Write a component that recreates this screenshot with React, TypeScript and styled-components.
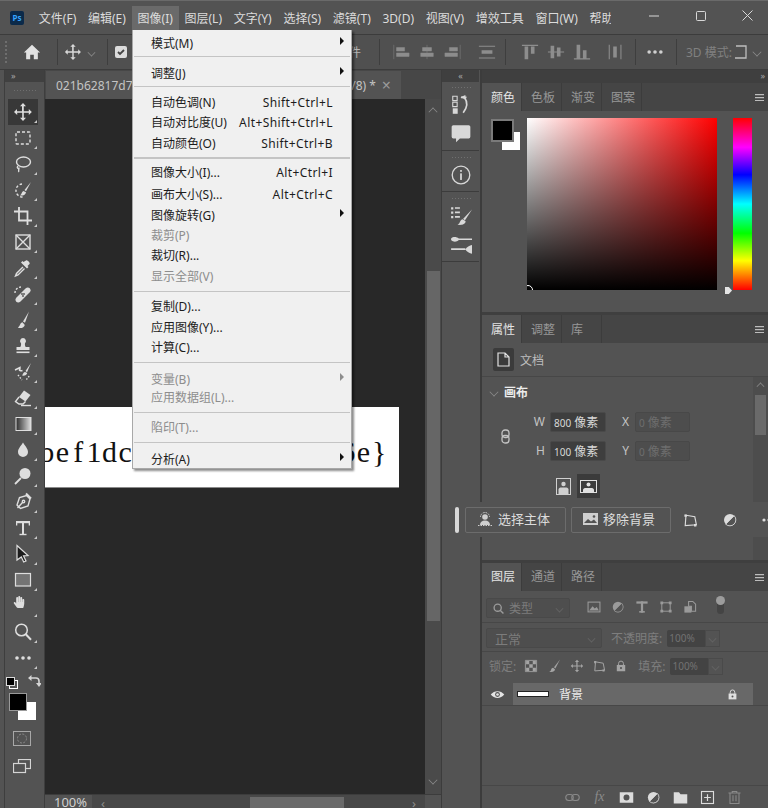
import React from "react";
import styled, { createGlobalStyle } from "styled-components";
import { FaHandPaper } from "react-icons/fa";

const FONT = `"Noto Sans", "Noto Sans CJK SC", sans-serif`;

const GlobalStyle = createGlobalStyle`
  html, body { margin: 0; padding: 0; background: #535353; }
  * { box-sizing: border-box; }
`;

const menuBar = ["文件(F)", "编辑(E)", "图像(I)", "图层(L)", "文字(Y)", "选择(S)", "滤镜(T)", "3D(D)", "视图(V)", "增效工具", "窗口(W)", "帮助"];

type Entry = { label?: string; keys?: string; sub?: boolean; off?: boolean; gap: number; sep?: boolean; bold?: boolean };

const imageMenu: Entry[] = [
  { label: "模式(M)", sub: true, gap: 0 },
  { sep: true, gap: 3 },
  { label: "调整(J)", sub: true, gap: 6 },
  { sep: true, gap: 3 },
  { label: "自动色调(N)", keys: "Shift+Ctrl+L", gap: 5 },
  { label: "自动对比度(U)", keys: "Alt+Shift+Ctrl+L", gap: 0 },
  { label: "自动颜色(O)", keys: "Shift+Ctrl+B", gap: 1 },
  { sep: true, bold: true, gap: 4 },
  { label: "图像大小(I)...", keys: "Alt+Ctrl+I", gap: 4 },
  { label: "画布大小(S)...", keys: "Alt+Ctrl+C", gap: 2 },
  { label: "图像旋转(G)", sub: true, gap: 1 },
  { label: "裁剪(P)", off: true, gap: 0 },
  { label: "裁切(R)...", gap: 0 },
  { label: "显示全部(V)", off: true, gap: 1 },
  { sep: true, gap: 5 },
  { label: "复制(D)...", gap: 4 },
  { label: "应用图像(Y)...", gap: 1 },
  { label: "计算(C)...", gap: 0 },
  { sep: true, gap: 5 },
  { label: "变量(B)", sub: true, off: true, gap: 6 },
  { label: "应用数据组(L)...", off: true, gap: -2 },
  { sep: true, gap: 5 },
  { label: "陷印(T)...", off: true, gap: 4 },
  { sep: true, gap: 5 },
  { label: "分析(A)", sub: true, gap: 6 },
];

const Icon = ({ size = 20, children }: { size?: number; children: React.ReactNode }) => (
  <svg width={size} height={size} viewBox="0 0 20 20" fill="currentColor">
    {children}
  </svg>
);

const line = { fill: "none", stroke: "currentColor", strokeWidth: 1.4 };

const MoveGlyph = () => (
  <path d="M10 1l3 3.200h-2.200v5h5V7l3 3-3 3v-2.200h-5v5H13L10 19l-3-3.200h2.200v-5h-5V13L1 10l3-3v2.200h5v-5H7z" />
);
const BrushGlyph = () => (
  <>
    <path d="M17.500 2L10 11.500l1.700 1.500z" />
    <path d="M9 12.300c-2 .2-2.400 1.600-3 3.200-.3.8-1.200 1.400-2 1.600 3 1 7 .4 7.300-2.600z" />
  </>
);
const EyeGlyph = () => (
  <>
    <path d="M1 10c4.500-6 13.500-6 18 0-4.500 6-13.500 6-18 0z" />
    <circle cx="10" cy="10" r="3.200" fill="#535353" />
    <circle cx="10" cy="10" r="1.800" />
  </>
);
const ContrastGlyph = () => (
  <>
    <circle cx="10" cy="10" r="7.500" />
    <path d="M15.300 4.700A7.500 7.500 0 0 1 4.700 15.300z" fill="#535353" stroke="currentColor" />
  </>
);
const LockGlyph = () => (
  <>
    <path d="M6.500 9V6.500a3.500 3.500 0 0 1 7 0V9" {...line} />
    <rect x="4" y="8.500" width="12" height="9" />
    <circle cx="10" cy="13" r="1.500" fill="#535353" />
  </>
);
const TransformGlyph = () => (
  <g {...line}>
    <path d="M5 4l11 2 2 10-14 1z" />
    <path d="M3 3h3v3H3zM15 15h3v3h-3z" fill="currentColor" stroke="none" />
  </g>
);
const BoxCorners = () => (
  <>
    <rect x="4" y="4" width="12" height="12" {...line} />
    <path d="M2 2h4v4H2zM14 2h4v4h-4zM2 14h4v4H2zM14 14h4v4h-4z" />
  </>
);

const tools: React.ReactNode[] = [
  <MoveGlyph />,
  <rect x="3" y="4" width="14" height="12" rx="1" {...line} strokeDasharray="3 2" />,
  <>
    <ellipse cx="10.500" cy="8" rx="7" ry="5" {...line} />
    <path d="M5 12c-2 2 1 3.500 1 1.500 0 2-1 3.500 0 4.500" {...line} />
  </>,
  <>
    <path d="M9 4a6.500 6.500 0 1 0 1 13" {...line} strokeDasharray="2.500 1.800" />
    <path d="M18 2l-6.500 8 1.500 1.300z" />
    <path d="M10.500 11c-2 .5-1.500 3-3.500 4.500 3 .5 6-1 6-3.300z" />
  </>,
  <path d="M6 1v13.500h13M1 5.500h13.500V19" fill="none" stroke="currentColor" strokeWidth="1.800" />,
  <g {...line}>
    <rect x="3" y="3" width="14" height="14" />
    <path d="M3 3l14 14M17 3L3 17" />
  </g>,
  <>
    <path d="M10 9l-6.500 6.500L2.500 18l2.500-1L11.500 10.500" {...line} />
    <path d="M13 2.500c1-1.200 4.700 2.500 3.500 3.500l-2 2 1 1-1.500 1.500-6-6L9.500 3l1 1z" />
  </>,
  <>
    <path d="M8 3a6 6 0 0 0-6 6" {...line} strokeDasharray="2 1.600" />
    <path d="M3.500 13.500l9-9c3-3 7 1 4 4l-9 9c-3 3-7-1-4-4z" />
    <circle cx="9" cy="10" r=".9" fill="#535353" />
    <circle cx="11" cy="10" r=".9" fill="#535353" />
    <circle cx="10" cy="12" r=".9" fill="#535353" />
  </>,
  <>
    <path d="M16 1.500l-6 10 2 1.200z" />
    <path d="M9.500 12.300c-2 .3-2 2-3 3.500-.5.8-1 1.200-1.700 1.600 2.500 1.300 6.500.5 7-2.500z" />
  </>,
  <>
    <path d="M10 2a3 3 0 0 1 2 5.200c-.3 1.500.2 3 .7 3.800H16.500v3h-13v-3h3.800c.5-.8 1-2.300.7-3.800A3 3 0 0 1 10 2z" />
    <rect x="3.500" y="15.500" width="13" height="1.600" />
  </>,
  <>
    <path d="M18 1l-5.500 8 1.500 1.200z" />
    <path d="M12 10c-2 .3-1.800 2.200-3 3.600 2.500.6 5-.6 5.200-2.500z" />
    <path d="M2 8l5-2.500v1.600C5 8.500 8 9 9.500 8.500" {...line} />
    <path d="M5 13l4 5M16 14a6 6 0 0 1-4 4" {...line} strokeDasharray="1.500 1.500" />
  </>,
  <>
    <path d="M11 2.500l6.500 4.500-5 6.500-6.500-4.500z" />
    <path d="M6 9l-3.500 4.500L6 16h4l2.500-2.500" {...line} />
    <path d="M8 17.500h10" {...line} />
  </>,
  <>
    <defs>
      <linearGradient id="toolGrad" x1="0" x2="1">
        <stop offset="0" stopColor="#2c2c2c" />
        <stop offset="1" stopColor="#e0e0e0" />
      </linearGradient>
    </defs>
    <rect x="3" y="3.500" width="15" height="13" fill="url(#toolGrad)" stroke="currentColor" strokeWidth="1" />
  </>,
  <path d="M10 2.500c2 3.500 5 6 5 9.500a5 5 0 0 1-10 0c0-3.500 3-6 5-9.500z" />,
  <>
    <circle cx="12" cy="7.500" r="5.500" />
    <path d="M8 12l-6 6" fill="none" stroke="currentColor" strokeWidth="1.800" />
  </>,
  <g {...line}>
    <path d="M13.500 3.500l3.500 3.500-2 7-7.500 2.500L4 13l2.500-7.500z" />
    <path d="M4.500 16l5-5.500" />
    <circle cx="10.500" cy="9.500" r="1.200" />
    <path d="M13 1.500l5 5" strokeWidth="2" />
  </g>,
  <>
    <rect x="3" y="3" width="14" height="2.200" />
    <rect x="9" y="3" width="2" height="14" />
    <rect x="6.500" y="15.800" width="7" height="1.400" />
    <rect x="3" y="3" width="1.300" height="4.500" />
    <rect x="15.700" y="3" width="1.300" height="4.500" />
  </>,
  <>
    <path d="M4 1.500l11 10-4.500.3L13 17l-2.300 1-2.400-5L4 16z" fill="#1c1c1c" stroke="currentColor" strokeWidth="1.200" />
  </>,
  <rect x="2.500" y="3.500" width="15" height="12.500" fill="#747474" stroke="currentColor" strokeWidth="1.200" />,
  <FaHandPaper x="0" y="0" width="20" height="20" />,
  <g {...line} strokeWidth={1.500}>
    <circle cx="8.500" cy="8" r="5.800" />
    <path d="M12.800 12.300l5.200 5.400" strokeWidth={2} />
  </g>,
  <>
    <circle cx="4" cy="10" r="1.800" />
    <circle cx="10" cy="10" r="1.800" />
    <circle cx="16" cy="10" r="1.800" />
  </>,
];

export default function App() {
  return (
    <Window>
      <GlobalStyle />
      <TitleBar>
        <PsLogo>Ps</PsLogo>
        <MenuItems>
          {menuBar.map((m) => (
            <TopItem key={m} $open={m === "图像(I)"}>
              {m}
            </TopItem>
          ))}
        </MenuItems>
        <WinButtons>
          <WinButton>
            <svg width="10" height="10" viewBox="0 0 10 10"><path d="M0 5h10" stroke="currentColor" /></svg>
          </WinButton>
          <WinButton>
            <svg width="10" height="10" viewBox="0 0 10 10"><rect x=".5" y=".5" width="9" height="9" rx="1" fill="none" stroke="currentColor" /></svg>
          </WinButton>
          <WinButton>
            <svg width="11" height="11" viewBox="0 0 11 11"><path d="M.5.5l10 10M10.500.5l-10 10" stroke="currentColor" /></svg>
          </WinButton>
        </WinButtons>
      </TitleBar>

      <OptionsBar>
        <Grip />
        <OptHome>
          <Icon size={18}><path d="M10 2L1 10.500h2.500V18h4.500v-5h4v5h4.500v-7.500H19z" /></Icon>
        </OptHome>
        <OptSep />
        <OptMove>
          <Icon size={18}><MoveGlyph /></Icon>
          <Chevron $w={7} />
        </OptMove>
        <OptSep />
        <OptCheck>
          <svg width="10" height="10" viewBox="0 0 10 10"><path d="M2 5l2 2 4-4" fill="none" stroke="#444" strokeWidth="1.800" /></svg>
        </OptCheck>
        <OptGhost>件</OptGhost>
        <OptSep $mr={12} />
        <AlignGroup>
          {[
            "M2 2v16M5 5h9v4H5zM5 11h14v4H5z",
            "M10 2v16M5 5h10v4H5zM3 11h14v4H3z",
            "M18 2v16M6 5h9v4H6zM1 11h14v4H1z",
          ].map((d) => (
            <AlignIcon key={d}>
              <Icon size={18}><path d={d} stroke="currentColor" strokeWidth=".5" /></Icon>
            </AlignIcon>
          ))}
          <AlignIcon $ml={8}>
            <Icon size={18}><path d="M1 3h18v1.200H1zM1 16h18v1.200H1zM4 8h12v4H4z" /></Icon>
          </AlignIcon>
        </AlignGroup>
        <OptSep $mr={15} $ml={9} />
        <AlignGroup>
          {[
            "M1 2h18v1.200H1zM4 4h4v14H4zM11 4h4v8h-4z",
            "M1 9.500h18v1H1zM4 3h4v14H4zM11 5h4v10h-4z",
            "M1 17h18v1.200H1zM4 2h4v15H4zM11 8h4v9h-4z",
          ].map((d) => (
            <AlignIcon key={d}>
              <Icon size={18}><path d={d} /></Icon>
            </AlignIcon>
          ))}
          <AlignIcon $ml={7}>
            <Icon size={18}><path d="M3 2h1.200v16H3zM16 2h1.200v16H16zM8 4h4v12H8z" /></Icon>
          </AlignIcon>
        </AlignGroup>
        <OptSep $ml={11} $mr={10} />
        <OptDots>
          <Icon size={18}>
            <circle cx="3.500" cy="10" r="2" />
            <circle cx="10" cy="10" r="2" />
            <circle cx="16.500" cy="10" r="2" />
          </Icon>
        </OptDots>
        <OptSep $ml={12} $mr={9} />
        <Opt3D>3D 模式:</Opt3D>
        <Opt3DIcon>
          <svg width="12" height="14" viewBox="0 0 12 14"><path d="M1 1h10v12H0" fill="none" stroke="#bdbdbd" strokeWidth="1.300" /></svg>
        </Opt3DIcon>
        <Chevron $w={8} />
      </OptionsBar>

      <Workspace>
        <ToolColumn>
          <ColHeader>»</ColHeader>
          <ToolGrip />
          {tools.map((t, i) => (
            <Tool key={i} $active={i === 0}>
              <Icon>{t}</Icon>
            </Tool>
          ))}
          <MiniColors>
            <MiniSwatch />
            <svg width="14" height="14" viewBox="0 0 14 14">
              <path d="M2 4h7a3 3 0 0 1 3 3v4" fill="none" stroke="#d5d5d5" strokeWidth="1.600" />
              <path d="M4.500 1v6L1 4zM9 9h6l-3 4z" fill="#d5d5d5" />
            </svg>
          </MiniColors>
          <ColorStack>
            <BackSwatch />
            <FrontSwatch />
          </ColorStack>
          <QuickMask>
            <svg width="18" height="15" viewBox="0 0 18 15">
              <rect x=".5" y=".5" width="17" height="14" fill="none" stroke="#a8a8a8" />
              <circle cx="9" cy="7.500" r="4.500" fill="none" stroke="#8e8e8e" strokeDasharray="2 1.500" />
            </svg>
          </QuickMask>
          <ScreenMode>
            <svg width="18" height="15" viewBox="0 0 18 15" fill="none" stroke="#d5d5d5" strokeWidth="1.200">
              <rect x="5.500" y=".5" width="12" height="9" />
              <rect x=".5" y="4.500" width="12" height="9" fill="#535353" />
            </svg>
          </ScreenMode>
        </ToolColumn>

        <DocColumn>
          <DocTabs>
            <DocTab>
              <span>021b62817d7f</span>
              <DocTabEnd>
                (RGB/8) *<CloseX>×</CloseX>
              </DocTabEnd>
            </DocTab>
          </DocTabs>
          <DocBody>
            <Pasteboard>
              <Canvas>
                <CanvasRun $left>
                  {"bef1dc".split("").map((c, i) => (
                    <CanvasChar key={i}>{c}</CanvasChar>
                  ))}
                </CanvasRun>
                <CanvasRun>
                  {"6e}".split("").map((c, i) => (
                    <CanvasChar key={i}>{c}</CanvasChar>
                  ))}
                </CanvasRun>
              </Canvas>
            </Pasteboard>
            <VScroll>
              <Chevron $w={8} $up />
              <VThumb />
              <VEnd>
                <Chevron $w={8} />
              </VEnd>
            </VScroll>
          </DocBody>
          <StatusBar>
            <Zoom>100%</Zoom>
            <HScroll>
              <HArrow>‹</HArrow>
              <HThumb />
              <HArrow>›</HArrow>
            </HScroll>
            <Corner />
          </StatusBar>
        </DocColumn>

        <Dock>
          <StripHeader $align="center">«</StripHeader>
          <DockGroup $h={68}>
            <DockGrip />
            <DockIcon>
              <Icon size={22}>
                <path d="M2.500 2h4v4h-4zM2.500 7.500h4v4h-4z" fill="none" stroke="currentColor" />
                <path d="M2.500 13h4.500v5H2.500z" />
                <path d="M10 3h5l-2 0c3 4 3 9-1 14" fill="none" stroke="currentColor" strokeWidth="1.500" />
                <path d="M9.500 3L14 1v4z" />
              </Icon>
            </DockIcon>
            <DockIcon>
              <Icon size={22}><path d="M3 2h14a1.500 1.500 0 0 1 1.500 1.500v9A1.500 1.500 0 0 1 17 14H9l-3.500 3.500V14H3a1.500 1.500 0 0 1-1.500-1.500v-9A1.500 1.500 0 0 1 3 2z" /></Icon>
            </DockIcon>
          </DockGroup>
          <DockGroup $h={39}>
            <DockGrip />
            <DockIcon>
              <Icon size={22}>
                <circle cx="10" cy="10" r="8" fill="none" stroke="currentColor" strokeWidth="1.200" />
                <rect x="9.200" y="8.500" width="1.600" height="6" />
                <rect x="9.200" y="5.500" width="1.600" height="1.600" />
              </Icon>
            </DockIcon>
          </DockGroup>
          <DockGroup $h={68}>
            <DockGrip />
            <DockIcon>
              <Icon size={22}>
                <path d="M1 2h2v2H1zM1 6h2v2H1zM1 10h2v2H1zM4.500 2H9v1.500H4.500zM4.500 6H9v1.500H4.500zM4.500 10H9v1.500H4.500z" />
                <path d="M20 4l-8 8.500 1.500 1.500z" />
                <path d="M11.500 13c-2 .3-2 2-3 3.500-.4.600-1.500 1-2 1.300 3 .7 7.500.3 7.700-3z" />
              </Icon>
            </DockIcon>
            <DockIcon>
              <Icon size={22}>
                <path d="M1 4c2-2 5-1.500 7 0 3 .2 7 0 12 0v1.500H8c-2 2-5 2-7 0z" />
                <path d="M1 13h13v1.500H1zM14 14c1-2 4-3.500 6-4v8c-2-.5-5-2-6-4z" />
              </Icon>
            </DockIcon>
          </DockGroup>
        </Dock>

        <PanelColumn>
          <StripHeader $align="flex-end">»</StripHeader>

          <ColorPanel>
            <Tabs labels={["颜色", "色板", "渐变", "图案"]} />
            <ColorBody>
              <SwatchPair>
                <SwatchBack />
                <SwatchFront />
              </SwatchPair>
              <SatVal>
                <SatCursor />
              </SatVal>
              <HueCol>
                <Hue />
                <HueArrow />
              </HueCol>
            </ColorBody>
          </ColorPanel>

          <PropsPanel>
            <Tabs labels={["属性", "调整", "库"]} lift={1} />
            <DocRow>
              <DocIconBox>
                <svg width="13" height="15" viewBox="0 0 13 15" fill="none" stroke="#e2e2e2" strokeWidth="1.200">
                  <path d="M1 1h7l4 4v9H1zM8 1v4h4" />
                </svg>
              </DocIconBox>
              <DocRowLabel>文档</DocRowLabel>
            </DocRow>
            <PropsBody>
              <PropsMain>
                <SectionHead>
                  <Chevron $w={8} />
                  <SectionTitle>画布</SectionTitle>
                </SectionHead>
                <DimGrid>
                  <LinkCell>
                    <svg width="9" height="15" viewBox="0 0 9 15" fill="none" stroke="#c4c4c4" strokeWidth="1.300">
                      <rect x="1" y="1" width="7" height="7.500" rx="3" />
                      <rect x="1" y="6.500" width="7" height="7.500" rx="3" />
                    </svg>
                  </LinkCell>
                  <DimLabel>W</DimLabel>
                  <DimInput><small>800</small> 像素</DimInput>
                  <DimLabel $pr={6}>X</DimLabel>
                  <DimInput $off><small>0</small> 像素</DimInput>
                  <DimLabel>H</DimLabel>
                  <DimInput><small>100</small> 像素</DimInput>
                  <DimLabel $pr={6}>Y</DimLabel>
                  <DimInput $off><small>0</small> 像素</DimInput>
                </DimGrid>
                <OrientRow>
                  <OrientBtn>
                    <svg width="15" height="17" viewBox="0 0 15 17">
                      <rect x=".5" y=".5" width="14" height="16" fill="none" stroke="#d0d0d0" />
                      <circle cx="7.500" cy="6" r="2.200" fill="#d0d0d0" />
                      <path d="M2.500 16v-4.500c0-1 1-2 2-2h6c1 0 2 1 2 2V16z" fill="#d0d0d0" />
                    </svg>
                  </OrientBtn>
                  <OrientBtn $on>
                    <svg width="17" height="13" viewBox="0 0 17 13">
                      <rect x=".5" y=".5" width="16" height="12" fill="none" stroke="#e0e0e0" />
                      <circle cx="8.500" cy="4.500" r="2" fill="#e0e0e0" />
                      <path d="M3 12v-2c0-1 1-2 2-2h7c1 0 2 1 2 2v2z" fill="#e0e0e0" />
                    </svg>
                  </OrientBtn>
                </OrientRow>
              </PropsMain>
              <PropsScroll>
                <Chevron $w={7} $up />
                <PropsThumb />
              </PropsScroll>
            </PropsBody>
          </PropsPanel>

          <LayersPanel>
            <Tabs labels={["图层", "通道", "路径"]} lift={3} />
            <FilterRow>
              <Select $w={84}>
                <svg width="11" height="11" viewBox="0 0 20 20" fill="none" stroke="#9a9a9a" strokeWidth="2.500">
                  <circle cx="8.500" cy="8.500" r="6.500" />
                  <path d="M13 13l6 6" />
                </svg>
                <SelectText>类型</SelectText>
                <Chevron $w={7} $dim />
              </Select>
              <FilterIcons>
                <Icon size={14}>
                  <rect x="1.500" y="3" width="17" height="14" fill="none" stroke="currentColor" strokeWidth="1.500" />
                  <path d="M3 15l5-6 3 3 3-2 3 5z" />
                </Icon>
                <Icon size={14}><ContrastGlyph /></Icon>
                <Icon size={14}>
                  <rect x="2" y="2" width="16" height="3.200" />
                  <rect x="8.400" y="2" width="3.200" height="16" />
                  <rect x="6" y="15.800" width="8" height="2.200" />
                </Icon>
                <Icon size={14}><BoxCorners /></Icon>
                <Icon size={14}>
                  <path d="M8 2h6l4 4v10h-6V9H8z" fill="none" stroke="currentColor" strokeWidth="1.500" />
                  <rect x="2" y="9" width="10" height="9" />
                </Icon>
                <FilterToggle />
              </FilterIcons>
            </FilterRow>
            <ModeRow>
              <Select $w={116}>
                <SelectText $big>正常</SelectText>
                <Chevron $w={7} $dim />
              </Select>
              <DimText $ml={9}>不透明度:</DimText>
              <PercentBox>100%</PercentBox>
              <PercentChevron><Chevron $w={7} $dim /></PercentChevron>
            </ModeRow>
            <LockRow>
              <DimText $ml={7}>锁定:</DimText>
              <LockIcons>
                <Icon size={14}>
                  <path d="M2 2h16v16H2z" fill="none" stroke="currentColor" strokeWidth="1.200" />
                  <path d="M3 3h4.500v4.500H3zM12.500 3H17v4.500h-4.500zM7.500 7.500h5v5h-5zM3 12.500h4.500V17H3zM12.500 12.500H17V17h-4.500z" />
                </Icon>
                <Icon size={16}><BrushGlyph /></Icon>
                <Icon size={14}><MoveGlyph /></Icon>
                <Icon size={14}><TransformGlyph /></Icon>
                <Icon size={14}><LockGlyph /></Icon>
              </LockIcons>
              <DimText $ml={10}>填充:</DimText>
              <PercentBox $ml={5}>100%</PercentBox>
              <PercentChevron><Chevron $w={7} $dim /></PercentChevron>
            </LockRow>
            <LayerList>
              <EyeCell>
                <Icon size={15}><EyeGlyph /></Icon>
              </EyeCell>
              <LayerRow>
                <LayerThumb />
                <LayerName>背景</LayerName>
                <LayerLock>
                  <Icon size={13}><LockGlyph /></Icon>
                </LayerLock>
              </LayerRow>
            </LayerList>
            <LayerFooter>
              <Icon size={15}>
                <g {...line}>
                  <rect x="1" y="6" width="10" height="8" rx="4" />
                  <rect x="9" y="6" width="10" height="8" rx="4" />
                </g>
              </Icon>
              <FxMark>fx</FxMark>
              <Icon size={15}>
                <path fillRule="evenodd" d="M1 3h18v14H1zM10 6a4 4 0 1 0 0 8 4 4 0 0 0 0-8z" fill="#dcdcdc" />
              </Icon>
              <FooterBright>
                <Icon size={15}><ContrastGlyph /></Icon>
              </FooterBright>
              <FooterBright>
                <Icon size={15}><path d="M1 3h7l2 2.500h9V18H1z" /></Icon>
              </FooterBright>
              <FooterBright>
                <Icon size={15}>
                  <rect x="2" y="2" width="16" height="16" fill="none" stroke="currentColor" strokeWidth="1.500" />
                  <path d="M9.200 5.500h1.600v3.700h3.700v1.600h-3.700v3.700H9.200v-3.700H5.500V9.200h3.700z" />
                </Icon>
              </FooterBright>
              <Icon size={15}>
                <path d="M2 4h16M7 4V2h6v2M4 4v14h12V4M8 7v8M12 7v8" {...line} />
              </Icon>
            </LayerFooter>
          </LayersPanel>
        </PanelColumn>
      </Workspace>

      <ImageMenu>
        {imageMenu.map((e, i) =>
          e.sep ? (
            <MenuSep key={i} $gap={e.gap} $bold={e.bold} />
          ) : (
            <MenuRow key={i} $gap={e.gap} $off={e.off} $sub={e.sub}>
              <span>{e.label}</span>
              {e.keys && <MenuKeys>{e.keys}</MenuKeys>}
            </MenuRow>
          )
        )}
      </ImageMenu>

      <TaskBar>
        <TaskHandle />
        <TaskButton $w={101}>
          <svg width="16" height="14" viewBox="0 0 16 14" fill="#cfcfcf">
            <circle cx="8" cy="5" r="2.800" />
            <path d="M3 13c0-3 2-4.500 5-4.500S13 10 13 13z" />
            <path d="M3.500 5a4.500 4.500 0 0 1 9 0M1 13.500h14" fill="none" stroke="#cfcfcf" strokeDasharray="1.500 1" />
          </svg>
          选择主体
        </TaskButton>
        <TaskButton $w={100}>
          <svg width="15" height="12" viewBox="0 0 15 12">
            <rect width="15" height="12" fill="#cfcfcf" />
            <path d="M1 10l4-4 3 2.500 3-2 3 3.500z" fill="#535353" />
            <circle cx="11" cy="3.500" r="1.300" fill="#535353" />
          </svg>
          移除背景
        </TaskButton>
        <TaskIcons>
          <Icon size={16}><TransformGlyph /></Icon>
          <Icon size={16}><ContrastGlyph /></Icon>
          <TaskDots>
            <svg width="8" height="4" viewBox="0 0 8 4" fill="#dcdcdc">
              <circle cx="2" cy="2" r="1.600" />
              <circle cx="7" cy="2" r="1.600" />
            </svg>
          </TaskDots>
        </TaskIcons>
      </TaskBar>
    </Window>
  );
}

function Tabs({ labels, lift = 0 }: { labels: string[]; lift?: number }) {
  return (
    <TabBar>
      {labels.map((l, i) => (
        <PanelTab key={l} $on={i === 0} $lift={lift}>
          {l}
        </PanelTab>
      ))}
      <PanelMenu>
        <svg width="9" height="7" viewBox="0 0 9 7" fill="#bdbdbd">
          <path d="M0 0h9v1.200H0zM0 3h9v1.200H0zM0 6h9v1.200H0z" />
        </svg>
      </PanelMenu>
    </TabBar>
  );
}

const Window = styled.div`
  position: relative;
  width: 768px;
  height: 808px;
  overflow: hidden;
  background: #535353;
  font-family: ${FONT};
  font-size: 12px;
  color: #d4d4d4;
  display: flex;
  flex-direction: column;
`;

const TitleBar = styled.div`
  height: 34px;
  flex: none;
  display: flex;
  align-items: center;
  border-top: 1px solid #6a6a6a;
  position: relative;
`;

const PsLogo = styled.div`
  width: 14px;
  height: 14px;
  margin-left: 10px;
  border-radius: 2px;
  background: #0b2a4a;
  color: #37a5ff;
  font-size: 8px;
  font-weight: 700;
  line-height: 14px;
  text-align: center;
`;

const MenuItems = styled.div`
  display: flex;
  margin-left: 9px;
  width: 578px;
  overflow: hidden;
`;

const TopItem = styled.div<{ $open?: boolean }>`
  flex: none;
  height: 24px;
  line-height: 25px;
  padding: 0 5.85px;
  color: #dcdcdc;
  background: ${(p) => (p.$open ? "#6a6a6a" : "transparent")};
  white-space: nowrap;
`;

const WinButtons = styled.div`
  margin-left: auto;
  margin-right: -3px;
  display: flex;
  color: #d8d8d8;
`;

const WinButton = styled.div`
  width: 47px;
  height: 28px;
  display: flex;
  align-items: center;
  justify-content: center;
  margin-top: -4px;
`;

const OptionsBar = styled.div`
  height: 36px;
  flex: none;
  display: flex;
  align-items: center;
  border-top: 1px solid #3c3c3c;
  border-bottom: 1px solid #3c3c3c;
  background: #505050;
  padding-left: 5px;
  color: #a8a8a8;
`;

const Grip = styled.div`
  width: 4px;
  height: 22px;
  border-left: 2px dotted #6e6e6e;
`;

const OptHome = styled.div`
  color: #e2e2e2;
  margin-left: 14px;
  width: 34px;
  display: flex;
`;

const OptSep = styled.div<{ $ml?: number; $mr?: number }>`
  width: 1px;
  height: 26px;
  background: #3e3e3e;
  margin-left: ${(p) => p.$ml ?? 0}px;
  margin-right: ${(p) => p.$mr ?? 0}px;
`;

const OptMove = styled.div`
  width: 49px;
  padding-left: 6px;
  display: flex;
  align-items: center;
  gap: 6px;
  color: #d8d8d8;
`;

const OptCheck = styled.div`
  width: 12px;
  height: 12px;
  margin-left: 7px;
  background: #dcdcdc;
  border-radius: 2px;
  display: flex;
  align-items: center;
  justify-content: center;
`;

const OptGhost = styled.div`
  margin-left: 222px;
  width: 30px;
  color: #b5b5b5;
`;

const AlignGroup = styled.div`
  display: flex;
  align-items: center;
  gap: 8px;
`;

const AlignIcon = styled.div<{ $ml?: number }>`
  display: flex;
  margin-left: ${(p) => p.$ml ?? 0}px;
  color: #8d8d8d;
`;

const OptDots = styled.div`
  display: flex;
  color: #d0d0d0;
`;

const Opt3D = styled.div`
  width: 49px;
  color: #808080;
  white-space: nowrap;
`;

const Opt3DIcon = styled.div`
  display: flex;
  margin-right: 6px;
`;

const Chevron = styled.span<{ $w: number; $up?: boolean; $dim?: boolean }>`
  display: inline-block;
  flex: none;
  width: ${(p) => p.$w}px;
  height: ${(p) => p.$w}px;
  color: ${(p) => (p.$dim ? "#666" : "#8c8c8c")};
  border-right: 1px solid currentColor;
  border-bottom: 1px solid currentColor;
  transform: scale(0.8) rotate(${(p) => (p.$up ? "225deg" : "45deg")});
`;

const Workspace = styled.div`
  flex: 1;
  display: flex;
  min-height: 0;
`;

const ToolColumn = styled.div`
  width: 45px;
  flex: none;
  padding-left: 5px;
  background: #535353;
  border-right: 1px solid #3e3e3e;
  position: relative;
  &::before {
    content: "";
    position: absolute;
    left: 4px;
    top: 0;
    bottom: 0;
    width: 1px;
    background: #3e3e3e;
  }
`;

const ColHeader = styled.div`
  height: 12px;
  background: #404040;
  color: #a8a8a8;
  font-size: 9px;
  line-height: 11px;
  padding-left: 6px;
`;

const ToolGrip = styled.div`
  height: 17px;
  margin: 0 8px;
  background: radial-gradient(circle, #6f6f6f 0.7px, transparent 1px) 0 7px / 3px 3px repeat-x;
`;

const Tool = styled.div<{ $active?: boolean }>`
  position: relative;
  width: 30px;
  height: 26px;
  margin-left: 3px;
  display: flex;
  align-items: center;
  justify-content: center;
  color: #dedede;
  background: ${(p) => (p.$active ? "#383838" : "transparent")};
  &::after {
    content: "";
    position: absolute;
    right: 1px;
    bottom: 2px;
    border-style: solid;
    border-width: 0 0 3px 3px;
    border-color: transparent transparent #c8c8c8 transparent;
  }
`;

const MiniColors = styled.div`
  display: flex;
  align-items: center;
  justify-content: space-between;
  padding: 0 3px 0 1px;
  margin-top: 3px;
  height: 14px;
`;

const MiniSwatch = styled.div`
  width: 9px;
  height: 9px;
  background: #000;
  border: 1px solid #d8d8d8;
  box-shadow: 3px 3px 0 -1px #535353, 3px 3px 0 0 #fff;
`;

const ColorStack = styled.div`
  display: flex;
  width: 30px;
  height: 28px;
  margin: 5px 0 0 4px;
`;

const FrontSwatch = styled.div`
  position: absolute;
  left: 9px;
  width: 18px;
  height: 18px;
  background: #000;
  border: 1px solid #9a9a9a;
`;

const BackSwatch = styled.div`
  width: 18px;
  height: 18px;
  margin: 9px 0 0 9px;
  background: #fff;
`;

const QuickMask = styled.div`
  display: flex;
  justify-content: center;
  margin: 10px 6px 0 0;
`;

const ScreenMode = styled.div`
  display: flex;
  justify-content: center;
  margin: 13px 6px 0 0;
`;

const DocColumn = styled.div`
  width: 396px;
  flex: none;
  display: flex;
  flex-direction: column;
`;

const DocTabs = styled.div`
  height: 29px;
  flex: none;
  background: #474747;
  padding: 1px 40px 0 1px;
  display: flex;
`;

const DocTab = styled.div`
  flex: 1;
  background: #535353;
  color: #c4c4c4;
  display: flex;
  align-items: center;
  justify-content: space-between;
  padding: 0 10px 0 10px;
  white-space: nowrap;
`;

const DocTabEnd = styled.span`
  display: flex;
  align-items: center;
  gap: 6px;
`;

const CloseX = styled.span`
  font-size: 16px;
  line-height: 1;
  color: #9a9a9a;
`;

const DocBody = styled.div`
  flex: 1;
  display: flex;
  min-height: 0;
`;

const Pasteboard = styled.div`
  width: 380px;
  background: #282828;
  padding-top: 308px;
  overflow: hidden;
`;

const Canvas = styled.div`
  width: 354px;
  height: 81px;
  padding-top: 9px;
  background: #fff;
  display: flex;
  align-items: center;
  justify-content: space-between;
  overflow: hidden;
  color: #111;
  font-family: "Liberation Serif", serif;
  font-size: 30px;
  border-bottom: 1px solid #8a8a8a;
`;

const CanvasRun = styled.span<{ $left?: boolean }>`
  display: flex;
  margin: ${(p) => (p.$left ? "0 0 0 -6px" : "0 12px 0 0")};
`;

const CanvasChar = styled.span`
  width: 15.7px;
  text-align: center;
`;

const VScroll = styled.div`
  flex: 1;
  background: #4a4a4a;
  display: flex;
  flex-direction: column;
  align-items: center;
  padding-top: 9px;
`;

const VThumb = styled.div`
  width: 13px;
  height: 350px;
  margin-top: 155px;
  background: #666;
`;

const VEnd = styled.div`
  margin-top: auto;
  padding-bottom: 6px;
`;

const StatusBar = styled.div`
  height: 14px;
  flex: none;
  display: flex;
  border-top: 1px solid #3c3c3c;
`;

const Zoom = styled.div`
  width: 47px;
  padding-left: 9px;
  background: #535353;
  color: #d0d0d0;
  font-size: 13px;
  line-height: 15px;
  white-space: nowrap;
  overflow: hidden;
`;

const HScroll = styled.div`
  width: 333px;
  background: #484848;
  display: flex;
  padding: 2px 9px 0 9px;
  align-items: flex-start;
`;

const HArrow = styled.span`
  color: #8c8c8c;
  font-size: 13px;
  line-height: 12px;
`;

const HThumb = styled.div`
  width: 94px;
  height: 12px;
  margin-left: 145px;
  margin-right: auto;
  background: #6a6a6a;
`;

const Corner = styled.div`
  flex: 1;
  background: #535353;
`;

const Dock = styled.div`
  width: 41px;
  flex: none;
  display: flex;
  flex-direction: column;
  gap: 2px;
  border-left: 1px solid #3c3c3c;
  border-right: 2px solid #3c3c3c;
  padding-right: 1px;
`;

const StripHeader = styled.div<{ $align: string }>`
  height: 12px;
  flex: none;
  background: #3f3f3f;
  color: #a8a8a8;
  font-size: 9px;
  line-height: 11px;
  display: flex;
  justify-content: ${(p) => p.$align};
  padding: 0 3px;
  margin-bottom: -1px;
`;

const DockGroup = styled.div<{ $h: number }>`
  height: ${(p) => p.$h}px;
  flex: none;
  display: flex;
  flex-direction: column;
  align-items: center;
  border-bottom: 1px solid #3c3c3c;
`;

const DockGrip = styled.div`
  width: 20px;
  height: 5px;
  margin-top: 2px;
  background: radial-gradient(circle, #707070 0.7px, transparent 1px) 0 1px / 3px 3px repeat-x;
`;

const DockIcon = styled.div`
  height: 29px;
  display: flex;
  align-items: center;
  color: #d8d8d8;
`;

const PanelColumn = styled.div`
  flex: 1;
  min-width: 0;
  display: flex;
  flex-direction: column;
  gap: 3px;
  background: #3f3f3f;
`;

const ColorPanel = styled.div`
  height: 229px;
  flex: none;
  margin-top: -1px;
  background: #535353;
`;

const TabBar = styled.div`
  height: 28px;
  flex: none;
  background: #454545;
  display: flex;
  align-items: stretch;
`;

const PanelTab = styled.div<{ $on?: boolean; $lift: number }>`
  width: 40px;
  padding: 0 0 ${(p) => p.$lift}px 9px;
  display: flex;
  align-items: center;
  font-size: 12px;
  color: ${(p) => (p.$on ? "#e4e4e4" : "#979797")};
  background: ${(p) => (p.$on ? "#535353" : "transparent")};
  border-right: 1px solid #3c3c3c;
`;

const PanelMenu = styled.div`
  margin-left: auto;
  padding-right: 4px;
  display: flex;
  align-items: center;
`;

const ColorBody = styled.div`
  display: flex;
  padding: 7px 0 0 10px;
`;

const SwatchPair = styled.div`
  position: relative;
  width: 35px;
  height: 32px;
  margin-top: 2px;
`;

const SwatchFront = styled.div`
  position: absolute;
  left: 0;
  top: 0;
  width: 21px;
  height: 21px;
  background: #000;
  border: 1px solid #b8b8b8;
  outline: 2px solid #7a7a7a;
  outline-offset: -1px;
`;

const SwatchBack = styled.div`
  position: absolute;
  left: 10px;
  top: 12px;
  width: 18px;
  height: 18px;
  background: #fff;
`;

const SatVal = styled.div`
  position: relative;
  width: 190px;
  height: 172px;
  background: linear-gradient(to top, #000, rgba(0, 0, 0, 0)), linear-gradient(to right, #fff, #f00);
`;

const SatCursor = styled.div`
  position: absolute;
  left: -4px;
  bottom: -5px;
  width: 10px;
  height: 10px;
  border-radius: 50%;
  border: 1px solid #fff;
  clip-path: inset(0 0 5px 4px);
`;

const HueCol = styled.div`
  position: relative;
  margin-left: 16px;
`;

const Hue = styled.div`
  width: 19px;
  height: 172px;
  background: linear-gradient(to bottom, #f00 0%, #f0f 17%, #00f 33%, #0ff 50%, #0f0 67%, #ff0 83%, #f00 100%);
`;

const HueArrow = styled.div`
  position: absolute;
  left: -8px;
  bottom: -4px;
  width: 7px;
  height: 7px;
  background: #e4e4e4;
  clip-path: polygon(0 0, 55% 0, 100% 50%, 55% 100%, 0 100%);
`;

const PropsPanel = styled.div`
  height: 245px;
  flex: none;
  background: #535353;
  display: flex;
  flex-direction: column;
`;

const DocRow = styled.div`
  height: 34px;
  flex: none;
  display: flex;
  align-items: center;
  padding-left: 11px;
  border-bottom: 1px solid #474747;
`;

const DocIconBox = styled.div`
  width: 21px;
  height: 23px;
  background: #3b3b3b;
  border-radius: 2px;
  display: flex;
  align-items: center;
  justify-content: center;
`;

const DocRowLabel = styled.span`
  margin-left: 6px;
  color: #bdbdbd;
`;

const PropsBody = styled.div`
  flex: 1;
  display: flex;
  min-height: 0;
`;

const PropsMain = styled.div`
  flex: 1;
`;

const SectionHead = styled.div`
  height: 30px;
  display: flex;
  align-items: center;
  gap: 6px;
  padding-left: 8px;
`;

const SectionTitle = styled.span`
  color: #ececec;
  font-weight: 700;
  font-size: 12px;
`;

const DimGrid = styled.div`
  display: grid;
  grid-template-columns: 14px 33px 61px 29px 55px;
  grid-auto-rows: 20px;
  row-gap: 9px;
  margin: 5px 0 0 16px;
  & > :first-child {
    grid-row: 1 / span 2;
  }
`;

const LinkCell = styled.div`
  display: flex;
  align-items: center;
  justify-content: center;
`;

const DimLabel = styled.div<{ $pr?: number }>`
  text-align: right;
  padding-right: ${(p) => p.$pr ?? 0}px;
  line-height: 20px;
  color: #c4c4c4;
`;

const DimInput = styled.div<{ $off?: boolean }>`
  margin-left: ${(p) => (p.$off ? 0 : 5)}px;
  height: 20px;
  line-height: 19px;
  padding-left: 3px;
  background: ${(p) => (p.$off ? "#4d4d4d" : "#3e3e3e")};
  border: 1px solid ${(p) => (p.$off ? "#484848" : "#494949")};
  border-radius: 2px;
  color: ${(p) => (p.$off ? "#6e6e6e" : "#d8d8d8")};
  white-space: nowrap;
  small {
    font-size: 10px;
  }
`;

const OrientRow = styled.div`
  display: flex;
  align-items: center;
  gap: 6px;
  margin: 13px 0 0 74px;
`;

const OrientBtn = styled.div<{ $on?: boolean }>`
  width: ${(p) => (p.$on ? 23 : 15)}px;
  height: 24px;
  background: ${(p) => (p.$on ? "#3b3b3b" : "transparent")};
  display: flex;
  align-items: center;
  justify-content: center;
`;

const PropsScroll = styled.div`
  width: 15px;
  background: #4d4d4d;
  display: flex;
  flex-direction: column;
  align-items: center;
  padding-top: 6px;
`;

const PropsThumb = styled.div`
  width: 11px;
  height: 40px;
  margin-top: 5px;
  background: #6a6a6a;
`;

const LayersPanel = styled.div`
  flex: 1;
  min-height: 0;
  background: #535353;
  display: flex;
  flex-direction: column;
`;

const FilterRow = styled.div`
  height: 32px;
  flex: none;
  display: flex;
  align-items: center;
  padding: 3px 0 0 4px;
  border-bottom: 1px solid #474747;
`;

const Select = styled.div<{ $w: number }>`
  width: ${(p) => p.$w}px;
  height: 20px;
  padding: 0 6px;
  background: #4e4e4e;
  border: 1px solid #494949;
  border-radius: 2px;
  display: flex;
  align-items: center;
  gap: 5px;
  & > span:last-child {
    margin-left: auto;
  }
`;

const SelectText = styled.span<{ $big?: boolean }>`
  color: #7c7c7c;
  font-size: ${(p) => (p.$big ? 13 : 12)}px;
  margin-left: ${(p) => (p.$big ? 2 : 0)}px;
`;

const FilterIcons = styled.div`
  display: flex;
  align-items: center;
  gap: 10px;
  margin: -3px 0 0 17px;
  color: #9a9a9a;
`;

const FilterToggle = styled.div`
  position: relative;
  width: 7px;
  height: 14px;
  margin-left: 10px;
  border-radius: 4px;
  background: #444;
  &::before {
    content: "";
    position: absolute;
    left: -1px;
    top: -4px;
    width: 9px;
    height: 9px;
    border-radius: 50%;
    background: #9c9c9c;
  }
`;

const ModeRow = styled.div`
  height: 29px;
  flex: none;
  display: flex;
  align-items: center;
  padding: 2px 0 0 4px;
  border-bottom: 1px solid #474747;
`;

const DimText = styled.span<{ $ml: number }>`
  margin-left: ${(p) => p.$ml}px;
  color: #7e7e7e;
  white-space: nowrap;
`;

const PercentBox = styled.div<{ $ml?: number }>`
  width: 38px;
  height: 17px;
  margin-left: ${(p) => p.$ml ?? 5}px;
  background: #434343;
  color: #727272;
  font-size: 10px;
  line-height: 17px;
  padding-left: 2px;
  border-radius: 2px 0 0 2px;
`;

const PercentChevron = styled.div`
  width: 15px;
  height: 17px;
  display: flex;
  align-items: center;
  justify-content: center;
  border: 1px solid #4a4a4a;
`;

const LockRow = styled.div`
  height: 31px;
  flex: none;
  display: flex;
  align-items: center;
  padding-bottom: 3px;
`;

const LockIcons = styled.div`
  display: flex;
  align-items: center;
  gap: 8px;
  margin-left: 8px;
  color: #a4a4a4;
`;

const LayerList = styled.div`
  height: 23px;
  flex: none;
  display: flex;
  border-bottom: 1px solid #474747;
`;

const EyeCell = styled.div`
  width: 31px;
  display: flex;
  align-items: center;
  justify-content: center;
  color: #e4e4e4;
`;

const LayerRow = styled.div`
  width: 240px;
  background: #686868;
  display: flex;
  align-items: center;
  padding-left: 4px;
`;

const LayerThumb = styled.div`
  width: 32px;
  height: 6px;
  background: #fff;
  border: 1px solid #222;
`;

const LayerName = styled.span`
  margin-left: 10px;
  color: #ececec;
`;

const LayerLock = styled.span`
  margin-left: auto;
  margin-right: 14px;
  display: flex;
  color: #e0e0e0;
`;

const LayerFooter = styled.div`
  margin-top: auto;
  height: 23px;
  flex: none;
  display: flex;
  align-items: center;
  gap: 12px;
  padding-left: 83px;
  color: #8a8a8a;
  border-top: 1px solid #474747;
`;

const FooterBright = styled.span`
  display: flex;
  color: #dcdcdc;
`;

const FxMark = styled.span`
  width: 15px;
  font-family: "Liberation Serif", serif;
  font-style: italic;
  font-size: 14px;
  text-align: center;
  color: #8a8a8a;
`;

const ImageMenu = styled.div`
  position: absolute;
  left: 132px;
  top: 30px;
  width: 220px;
  height: 439px;
  padding-top: 3px;
  background: #f0f0f0;
  border: 1px solid #a8a8a8;
  border-width: 0 1px 1px 1px;
  box-shadow: 2px 2px 2px rgba(0, 0, 0, 0.45);
`;

const MenuRow = styled.div<{ $gap: number; $off?: boolean; $sub?: boolean }>`
  position: relative;
  height: 20px;
  margin-top: ${(p) => p.$gap}px;
  padding: 0 18px 0 18px;
  display: flex;
  align-items: center;
  justify-content: space-between;
  color: ${(p) => (p.$off ? "#8d8d8d" : "#1c1c1c")};
  white-space: nowrap;
  &::after {
    content: "";
    display: ${(p) => (p.$sub ? "block" : "none")};
    position: absolute;
    right: 7px;
    top: 4px;
    border-style: solid;
    border-width: 4px 0 4px 4px;
    border-color: transparent transparent transparent ${(p) => (p.$off ? "#8d8d8d" : "#111")};
  }
`;

const MenuKeys = styled.span`
  letter-spacing: 0.4px;
`;

const MenuSep = styled.div<{ $gap: number; $bold?: boolean }>`
  height: 1px;
  margin: ${(p) => p.$gap}px 1px 0;
  background: #c4c4c4;
  box-shadow: ${(p) => (p.$bold ? "0 1px 0 #c4c4c4" : "none")};
`;

const TaskBar = styled.div`
  position: absolute;
  left: 450px;
  top: 502px;
  width: 318px;
  height: 35px;
  background: #535353;
  display: flex;
  align-items: center;
  padding-left: 5px;
  overflow: hidden;
`;

const TaskHandle = styled.div`
  width: 4px;
  height: 26px;
  flex: none;
  border-radius: 2px;
  background: #d8d8d8;
  margin-right: 6px;
`;

const TaskButton = styled.div<{ $w: number }>`
  width: ${(p) => p.$w}px;
  height: 26px;
  flex: none;
  margin-right: 5px;
  padding: 0 0 2px 11px;
  border: 1px solid #6c6c6c;
  border-radius: 2px;
  display: flex;
  align-items: center;
  gap: 5px;
  color: #dcdcdc;
  font-size: 13px;
  white-space: nowrap;
`;

const TaskIcons = styled.div`
  display: flex;
  align-items: center;
  gap: 24px;
  margin-left: 6px;
  color: #dcdcdc;
`;

const TaskDots = styled.span`
  display: flex;
`;
